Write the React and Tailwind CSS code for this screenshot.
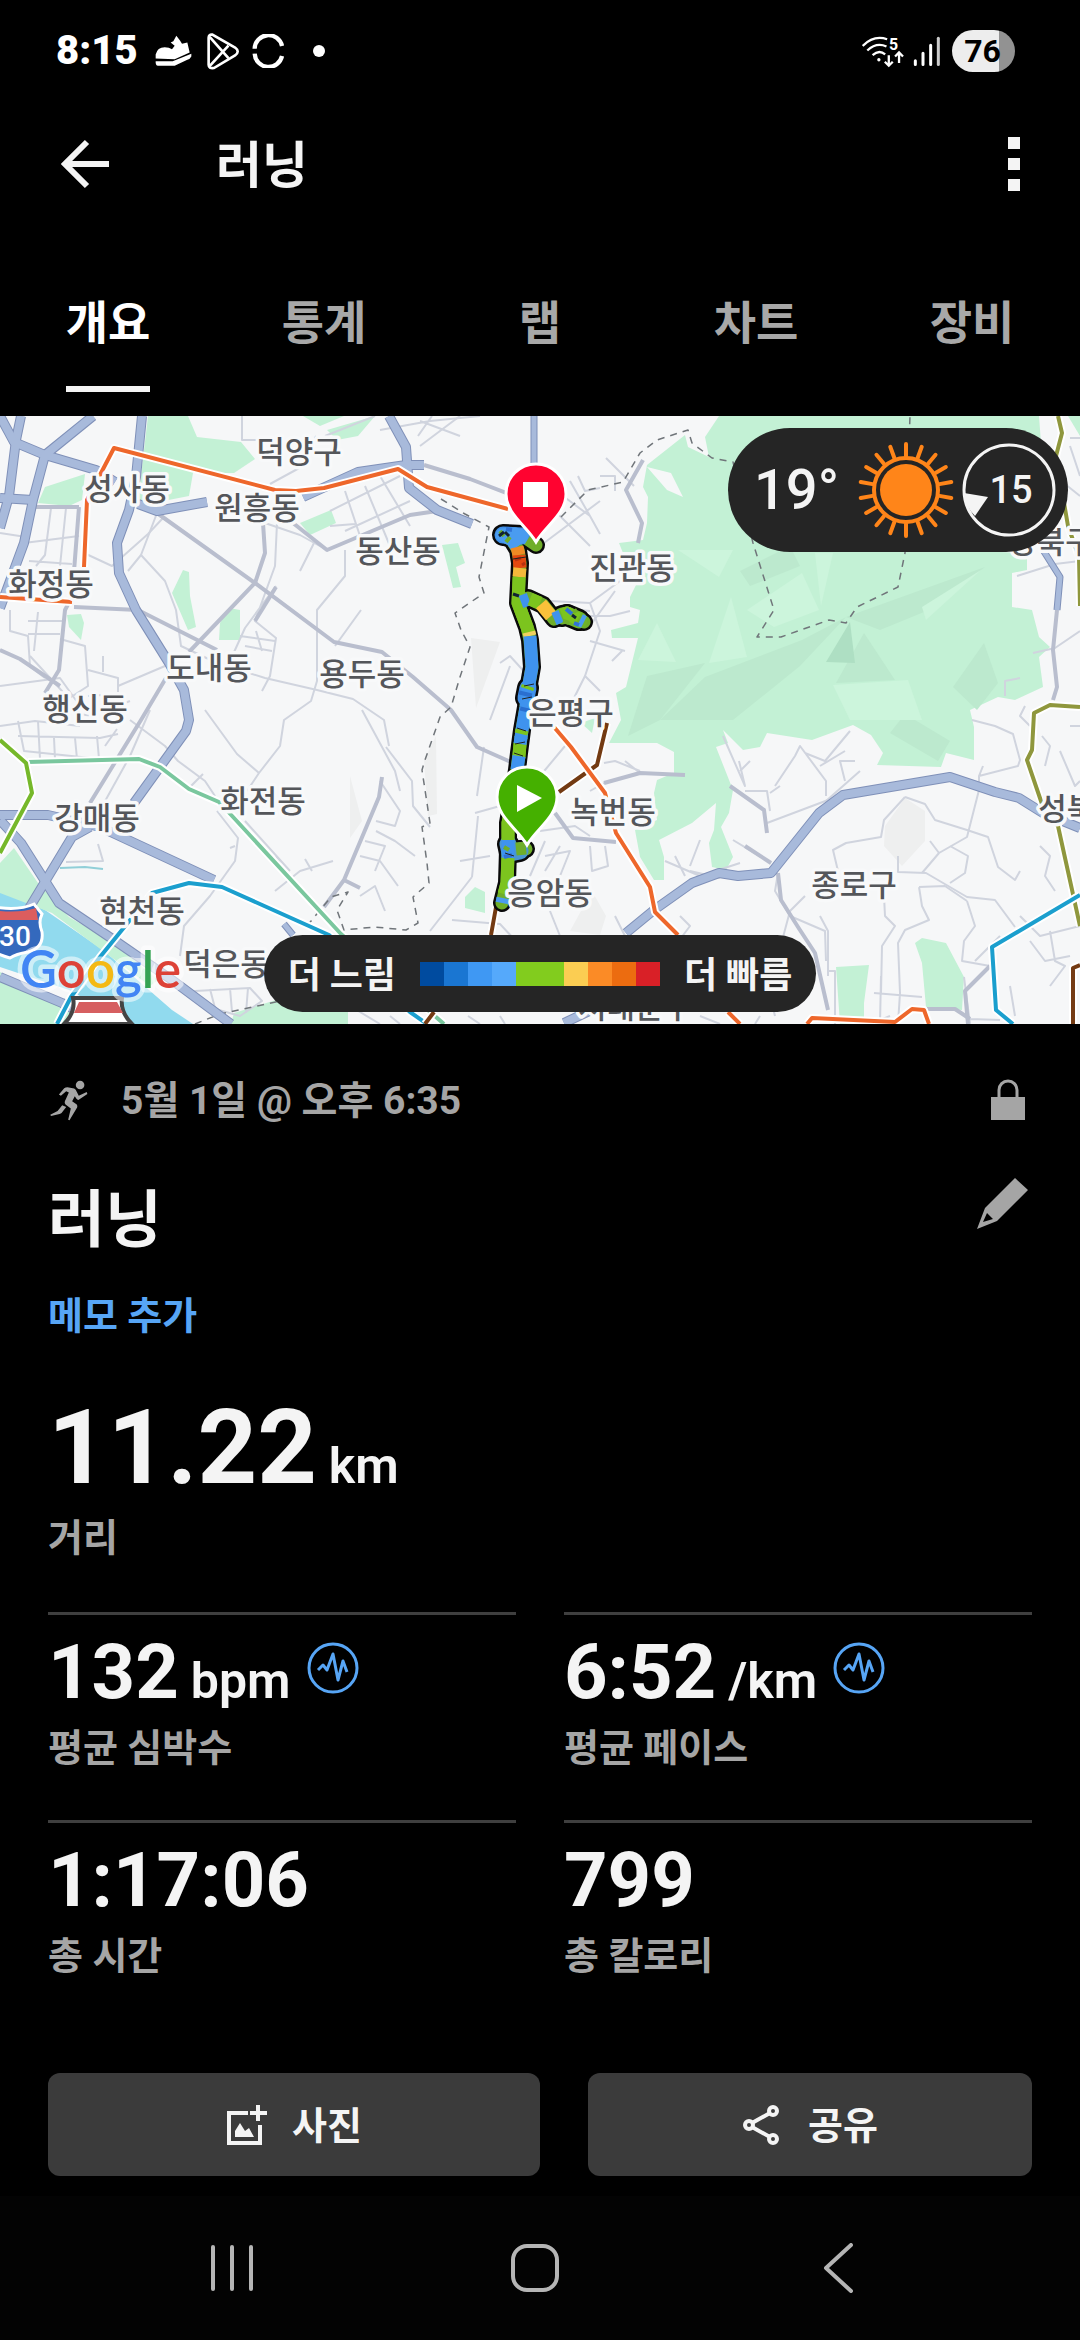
import { useState } from "react";

const tabs = ["개요", "통계", "랩", "차트", "장비"];

const paceColors = [
    "bg-[#004b9f]", "bg-[#1a76d2]", "bg-[#3f98f3]", "bg-[#55a9fb]", "bg-[#82cc1e]",
    "bg-[#82cc1e]", "bg-[#fbcd52]", "bg-[#fb8b26]", "bg-[#ec6c10]", "bg-[#d92027]",
];

const stats = [
    { value: "132", unit: "bpm", label: "평균 심박수", graph: true },
    { value: "6:52", unit: "/km", label: "평균 페이스", graph: true },
    { value: "1:17:06", label: "총 시간" },
    { value: "799", label: "총 칼로리" },
];

const places = [
    ["덕양구", 299, 33], ["성사동", 127, 70], ["원흥동", 257, 89], ["동산동", 398, 132],
    ["화정동", 51, 165], ["도내동", 209, 249], ["용두동", 362, 255], ["행신동", 85, 290],
    ["진관동", 632, 149], ["은평구", 571, 294], ["강매동", 97, 399], ["화전동", 263, 382],
    ["현천동", 142, 492], ["덕은동", 226, 545], ["녹번동", 613, 393], ["응암동", 550, 474],
    ["종로구", 854, 466], ["성북동", 1081, 390], ["강북구", 1051, 123], ["서대문구", 635, 588],
];

const parks = [
    "148,0 188,0 197,21 241,26 255,43 234,57 193,57 189,80 148,88 138,85",
    "38,87 45,71 85,58 82,84 69,90",
    "300,107 331,94 336,107 310,119",
    "327,14 375,0 358,20 337,24",
    "303,0 344,0 320,10",
    "442,129 458,127 465,147 456,151 461,171 453,172",
    "172,177 183,154 189,156 190,180 196,211 188,214",
    "219,224 220,207 229,192 240,194 240,224",
    "67,199 81,198 84,207 81,224 69,211",
    "0,447 14,432 38,467 69,501 114,527 158,564 150,570 52,497 0,477",
    "0,556 62,590 90,608 0,608",
    "234,597 286,581 348,590 348,608 231,608",
    "465,481 475,471 485,476 485,497 465,492",
    "915,527 922,522 946,527 964,561 962,594 926,591 922,547",
    "836,551 869,549 864,587 864,608 840,608",
    "581,307 595,302 592,317",
    "1068,0 1080,0 1080,20",
    "719,0 705,21 709,41 688,31 685,19 647,49 643,71 648,81 647,107 643,124 619,127 623,137 643,141 640,161 630,181 630,191 640,194 638,207 611,214 612,222 638,222 626,271 616,277 621,304 609,327 657,327 674,336 674,357 657,364 654,377 657,404 635,414 640,441 654,464 664,464 664,441 659,424 692,407 716,387 714,414 709,427 712,451 726,454 733,441 721,411 729,397 733,374 716,331 728,327 723,314 743,334 760,331 767,317 812,324 853,309 871,319 883,337 877,349 941,351 946,337 974,344 974,311 970,294 998,281 1015,284 1043,271 1039,241 1050,231 1039,221 1032,194 1012,191 1012,157 1027,154 1027,137 1001,136 1046,94 1039,0",
];

const darkFacets = [
    "705,261 802,224 846,201 800,250 733,304 660,304",
    "864,217 895,264 836,267",
    "953,271 984,227 998,267 977,294",
    "846,201 985,151 929,194 880,214",
    "647,260 705,247 660,304 628,320",
    "890,317 905,298 950,325 938,345",
    "740,155 790,130 800,150 750,170",
];

const lightFacets = [
    "709,247 731,181 747,241",
    "747,194 802,157 819,194 774,211",
    "678,134 733,134 719,161",
    "833,269 908,264 922,304 850,304",
    "638,244 657,207 676,246",
    "922,191 981,154 926,204",
    "815,137 833,137 821,190",
];

const minorRoads = [
    "M242 0V24L265 24M325 20L375 0M316 20L303 50L270 68M418 20L432 0M420 5L460 20M380 14L430 5L480 0",
    "M0 117L26 121M24 127L79 120M29 145L72 148M20 165L75 170M51 92L45 139L36 150M66 92L60 150M84 137L112 150L148 118L163 102",
    "M157 97L141 139L165 165L176 194L181 230L217 247L265 262L317 274L353 283L384 304L389 330M141 139L128 155",
    "M277 107L275 150L255 205L276 222L270 260L262 275M230 245L245 212L276 170M240 220L275 225M245 230L272 235M256 215L262 235",
    "M265 107L300 119L327 134M345 134L345 160L317 194L317 265L311 285L284 304L280 330L259 357L247 375",
    "M361 194L335 230M300 155L315 125M330 95L400 60M345 115L410 85M365 70L390 130M380 60L410 110M345 75L360 120M330 110L355 108",
    "M10 194L10 215L28 220L30 250M28 205L62 205M28 218L60 218M38 196L34 235M60 223L85 230L88 270L65 285M88 254L118 262L118 278L88 280M103 240L103 256",
    "M118 270L165 250M30 240L62 275L68 290M0 234L20 243L45 262M48 290L90 300L130 285M0 270L60 262L80 290",
    "M0 310L35 305L80 310M18 320L100 322L118 318M18 305L24 335L100 343M54 322L55 343M75 322L77 343M97 320L99 343M38 305L40 343M117 313L105 330",
    "M66 446L103 445L98 428M150 294L130 340L104 387M130 304L165 330L178 345L205 365L215 380M191 370L203 358",
    "M205 294L237 338L259 357M217 395L238 422L235 445L210 480L184 510L180 540M235 430L230 432",
    "M275 475L300 455L333 445M312 455L305 443M276 440L285 458M245 405L290 455",
    "M362 294L395 355L400 375M386 331L412 365L413 390L430 411M380 365L400 395L395 410L376 405M376 415L395 425L415 440M365 425L385 430L375 455M360 440L380 445L398 470M360 480L375 470L385 495",
    "M460 0L420 30M477 380L484 331M475 397L500 390M472 461L478 400M472 461L430 515M452 504L500 508L530 540M490 440L460 445",
    "M500 247L510 240L530 262M490 304L510 250M550 90L570 110L590 130M563 80L590 100L600 118M570 65L590 100M540 130L600 85",
    "M600 60L615 60L615 75M578 60L585 75L600 72M606 42L634 70M550 185L590 187L620 165M560 200L610 200L630 195M590 187L600 215L585 260L600 275M585 260L570 290",
    "M615 175L590 210M590 225L625 235M612 245L622 235M540 190L590 195M540 360L565 330M540 415L575 410L590 420M590 430L592 455L608 450L605 430",
    "M545 440L570 435L560 460M545 455L560 430M604 367L590 375M625 345L640 357M604 347L615 345L640 355M545 425L530 460M550 495L560 520M615 500L625 520M680 500L690 510L675 530",
    "M665 445L700 460M675 440L685 460M700 424L690 450M690 455L720 462M739 345L745 370L723 320M740 355L750 345M770 395L767 375L745 375",
    "M775 370L795 340L800 330L826 365L826 380M805 337L825 345L850 315M820 350L845 335M845 365L840 345L855 345M860 355L826 385M770 377L780 370",
    "M733 424L771 447M767 407L836 381M700 460L740 447M540 540L560 545M778 457L775 475L790 500L825 515L826 545M805 480L790 495L782 525",
    "M905 381L884 404L881 421L846 427L833 434L838 455M905 381L925 388L935 404L967 414L988 421L998 451L1015 464L1020 455",
    "M979 374L967 421L939 437L922 457M939 437L930 425M950 430L968 440L965 457L950 467M898 440L898 456L926 457L967 481L995 484L1015 511",
    "M919 471L922 490L929 504L905 514L898 527L900 577L898 608M919 471L945 470L967 485M874 577L922 581M881 560L880 608M890 600L870 608",
    "M884 480L885 500L895 510L882 530L881 577M827 555L835 555L835 608M820 500L828 515L828 560M967 485L975 510L964 525L962 545L990 550",
    "M972 304L995 310L1013 318L1020 344L1018 350L979 360L979 374M979 360L983 350M1025 290L1020 300L1030 310M1005 280L1005 265L1020 262",
    "M1017 160L1055 148L1080 145M1033 237L1055 232L1080 215M1055 60L1080 80M1070 22L1080 22M1070 30L1080 60M1070 310L1080 310M1042 320L1050 330L1045 350",
    "M1040 430L1050 440L1045 460L1055 475M1060 335L1075 370L1080 365M1020 500L1040 520L1080 510M1050 515L1055 545L1065 550L1050 570M1030 525L1045 545L1070 540",
    "M926 593L955 593L970 603L1000 604M964 561L970 608M1000 520L975 545M1010 570L1015 600M195 575L250 572L262 585L240 600L205 590ZM210 573L215 592M230 572L232 596M248 572L246 597",
    "M350 590L380 608M390 600L400 608M468 600L480 608M500 600L505 608M700 600L720 608M760 600L755 608M775 600L770 580L800 560",
];

const roads = [
    "M157 97L255 167L334 226L382 236L413 261L451 294L477 331L513 347",
    "M263 107L265 137L255 167L189 236M166 262L141 304L90 387",
    "M74 191L138 194L217 234",
    "M293 107L327 134L410 99L444 94",
    "M424 49L470 63L517 81",
    "M79 91L72 181L65 194L59 254L45 277",
    "M33 91L79 91",
    "M382 361L379 381L344 464L324 491M344 464L360 472",
    "M643 44L626 74L642 107L638 127",
    "M1057 194L1053 234L1057 271L1053 284",
    "M604 367L640 357L685 359M730 370L764 394L767 417",
    "M555 397L573 422L616 426",
    "M745 430L771 447",
    "M778 457L781 484L798 511L815 537L828 594",
    "M926 593L955 593L970 603",
    "M276 171L255 205",
    "M0 234L20 243L60 270",
    "M990 550L965 575L968 608",
];

const highways = [
    "M21 0L16 24L9 80L0 112",
    "M0 0L14 26L45 39L96 54L115 66",
    "M93 0L45 39L33 84L24 127L0 192",
    "M0 82L33 84",
    "M142 0L136 61L129 94L117 127L119 157L136 194L169 247L184 274L189 304L186 315L165 344L134 387",
    "M90 411L72 421L28 494",
    "M0 399L48 399L100 411L214 464",
    "M0 404L21 427L59 487L114 524L172 564L231 608",
    "M0 561L62 587L103 608",
    "M138 88L157 95L207 86M303 81L358 56L406 49L424 49",
    "M389 0L406 31L409 72L437 94L472 108",
    "M564 607L600 590M626 517L654 494L692 467L719 457L738 460L771 457L819 397L843 379L950 361L995 376L1019 382L1043 397L1080 412",
];

const rails = [
    { color: "#7ac79e", d: "M28 346L139 343L160 351L189 373L219 386L234 402L341 518L444 608" },
    { color: "#76b82a", d: "M0 324L26 347L32 377L0 437" },
    { color: "#1b9fce", d: "M57 608L71 581L100 541L152 477L189 467L222 471L329 519L410 596L427 608" },
    { color: "#8f973d", d: "M1058 0L1062 17L1056 40L1068 110L1079 141L1080 190M1080 291L1050 289L1034 297L1032 334L1027 344L1042 388L1058 410L1080 510" },
    { color: "#1b9fce", d: "M1080 479L992 531L996 594L1013 608" },
    { color: "#733a12", d: "M607 307L597 349L559 376M498 480L491 519M434 596L425 608M1080 549L1073 552L1073 608" },
    { color: "#ee672b", d: "M84 151L87 84L114 32L275 74L296 75L324 72L398 53L427 71L508 93M0 181L72 186" },
    { color: "#ee672b", d: "M554 311L571 331L605 377L616 417L650 471L655 496L678 519M728 596L740 608M807 608L812 602L895 606L912 593L924 594L929 608" },
];

const borders = [
    "M441 83L465 98L489 111L479 161L484 177L455 197L461 214L470 231L460 261L451 291L440 301L425 344L422 354L430 407L422 411L427 447L429 467L413 481L418 507L406 514L375 511L344 514L337 494L348 476L331 481L306 511",
    "M561 101L588 74L623 66L640 37L657 24L688 14L692 27L712 42L733 46L753 127L774 194L757 221L781 221L829 204L846 207L857 191L898 171L905 137L910 0",
    "M195 608L220 598L280 585",
];

// the whole run, used for the black outline under the pace colours
const track = "M536 129L526 122L515 118L502 119L512 124L518 134L520 147L519 167L518 187L527 211L530 224L532 251L528 274L526 291L522 314L519 337L517 354L508 407L508 434L507 467L502 487M518 187L528 182L543 189L554 203L567 197L584 206M508 434L526 433";

// places where the runner went back and forth, so the line gets wider
const loops = [
    { d: "M503 119L522 120", color: "#3f8fe6" },
    { d: "M562 200L567 199L579 204", color: "#6fb52a" },
    { d: "M508 428L510 437L520 435", color: "#4b96cf" },
    { d: "M528 272L526 282", color: "#3f8fe6" },
];

const paceSegments = [
    { color: "#4a9cf0", d: "M528 122L515 118L502 119L512 124L517 131" },
    { color: "#6fae2a", d: "M536 128L528 123" },
    { color: "#f08a24", d: "M517 131L519 139" },
    { color: "#e4480f", d: "M519 139L520 152" },
    { color: "#f5b93a", d: "M520 152L519 161" },
    { color: "#7cc41e", d: "M519 161L518 187L527 211L529 217" },
    { color: "#f0d060", d: "M529 216L530 220" },
    { color: "#3f93ee", d: "M530 220L532 251L528 274L526 291L522 314L521 322" },
    { color: "#2a6fd0", d: "M526 276L525 280M527 292L526 296" },
    { color: "#7cc41e", d: "M528 270L527 273M522 314L521 318" },
    { color: "#7cc41e", d: "M520 327L519 342" },
    { color: "#3f93ee", d: "M521 321L520 328M519 340L517 354" },
    { color: "#7cc41e", d: "M512 390L508 407L508 424" },
    { color: "#3f93ee", d: "M508 424L508 442" },
    { color: "#6fae2a", d: "M516 433L526 432" },
    { color: "#7cc41e", d: "M508 442L507 467L504 478" },
    { color: "#4a9cf0", d: "M503 482L502 487" },
    { color: "#3f93ee", d: "M521 186L529 183" },
    { color: "#7cc41e", d: "M530 183L540 187" },
    { color: "#fbc13a", d: "M541 188L551 200" },
    { color: "#3f93ee", d: "M554 203L561 200" },
    { color: "#7cc41e", d: "M562 199L567 197L578 203" },
    { color: "#4a9cf0", d: "M580 204L584 206" },
];

const Pin = ({ x, y, color, children }) => (
    <g transform={`translate(${x} ${y})`}>
        <path d="M0 0C-9 -16 -30 -28 -30 -48A30 30 0 1 1 30 -48C30 -28 9 -16 0 0Z" fill={color} stroke="#fff" strokeWidth="3" />
        {children}
    </g>
);

const RouteMap = () => (
    <svg viewBox="0 0 1080 608" preserveAspectRatio="xMidYMid slice" className="block w-full h-full" role="img" aria-label="러닝 경로 지도">
        <rect width="1080" height="608" fill="#f6f7f8" />
        <g fill="#eeefef">
            <path d="M471 222L500 226L476 292ZM350 360L362 405L350 422ZM424 344L436 320L437 398L428 400ZM885 410L905 382L925 395L925 425L902 450L884 430ZM570 515L592 475L606 500L600 519Z" />
        </g>
        <polygon points="0,474 45,494 103,534 172,594 193,608 131,608 69,574 0,551" fill="#91daee" />
        <path d="M60 452L85 451L103 453" stroke="#91cfd8" strokeWidth="2" fill="none" />
        {parks.map((p) => <polygon key={p} points={p} fill="#c3f1d5" />)}
        {darkFacets.map((p) => <polygon key={p} points={p} fill="#bce9ce" />)}
        {lightFacets.map((p) => <polygon key={p} points={p} fill="#ccf5dc" />)}
        <polygon points="826,246 850,206 855,247" fill="#aedfc3" />
        <polygon points="647,51 671,57 683,81 667,74" fill="#f6f7f8" />

        <g fill="none" strokeLinejoin="round">
            {minorRoads.map((d) => <path key={d} d={d} stroke="#d0d4de" strokeWidth="2" />)}
            {roads.map((d) => <path key={d} d={d} stroke="#b9bece" strokeWidth="4" />)}
            {borders.map((d) => <path key={d} d={d} stroke="#70757a" strokeWidth="1.5" strokeDasharray="7 6" />)}
            {highways.map((d) => <path key={d} d={d} stroke="#7f90b8" strokeWidth="10" />)}
            {highways.map((d) => <path key={d} d={d} stroke="#a8badb" strokeWidth="8" />)}
            <path d="M534 0V48M1043 134L1060 161L1057 194M284 508L293 519" stroke="#7f90b8" strokeWidth="7" />
            <path d="M534 0V48M1043 134L1060 161L1057 194M284 508L293 519" stroke="#a8badb" strokeWidth="5" />
            {rails.map(({ d, color }) => (
                <g key={d}>
                    <path d={d} stroke="#fff" strokeWidth="8" />
                    <path d={d} stroke={color} strokeWidth="4" />
                </g>
            ))}
        </g>

        <g fill="none" strokeLinejoin="round">
            <path d={track} stroke="#0a0a0a" strokeWidth="18" strokeLinecap="round" />
            {loops.map(({ d }) => <path key={d} d={d} stroke="#0a0a0a" strokeWidth="22" strokeLinecap="round" />)}
            <path d={track} stroke="#6fae2a" strokeWidth="13" strokeLinecap="round" />
            {loops.map(({ d, color }) => <path key={d} d={d} stroke={color} strokeWidth="17" strokeLinecap="round" />)}
            {paceSegments.map(({ d, color }) => <path key={d} d={d} stroke={color} strokeWidth="13" />)}
            <path d="M500 115L504 120M506 126L510 121M563 205L569 207M573 196L577 194M504 431L509 434" stroke="#6fae2a" strokeWidth="4" />
            <path d="M566 193L572 198M574 207L579 209M504 441L512 439M506 113L512 114" stroke="#2f72d6" strokeWidth="4" />
            <path d="M515 144L521 142M522 149L525 147" stroke="#b83210" strokeWidth="3" />
            <path d="M513 143L526 141M524 270L534 268M522 283L532 281M517 312L526 315M515 328L525 326M514 337L523 340M505 437L514 440" stroke="#222" strokeWidth="1" />
            <path d="M505 116L509 120M499 120L504 116M572 199L576 202M513 178L519 180" stroke="#123" strokeWidth="3" />
        </g>

        {/* interstate shield */}
        <path d="M-18 488Q14 497 34 488L42 498Q38 506 42 516Q44 532 28 536Q16 538 10 542Q-20 534 -20 516Z" fill="#3469bd" stroke="#fff" strokeWidth="3" />
        <path d="M-18 492Q14 499 36 492L38 504L-18 504Z" fill="#dc5d5e" />
        <text x="15" y="520" fontSize="28" fontWeight="500" fill="#fff" textAnchor="middle" dominantBaseline="central" fontFamily="Roboto, sans-serif">30</text>
        {/* national road shield */}
        <path d="M73 582H122Q120 596 132 608H64Q76 596 73 582Z" fill="#fff" stroke="#444" strokeWidth="4" />
        <path d="M79 586H117L123 597H74Z" fill="#d65f60" />
        <text x="98" y="627" fontSize="30" fontWeight="700" fill="#444" textAnchor="middle" fontFamily="Roboto, sans-serif">23</text>

        <g fontSize="31" fontWeight="500" fill="#54565a" stroke="#f8f9fa" strokeWidth="7" strokeLinejoin="round" paintOrder="stroke" textAnchor="middle" fontFamily='"Noto Sans CJK KR", sans-serif'>
            {places.map(([name, x, y]) => <text key={name} x={x} y={y} dominantBaseline="central">{name}</text>)}
        </g>

        <Pin x={527} y={429} color="#45b000">
            <path d="M-10 -60L15 -47L-10 -33Z" fill="#fff" />
        </Pin>
        <Pin x={536} y={126} color="#ff0330">
            <rect x="-13" y="-60" width="25" height="25" fill="#fff" />
        </Pin>

        <text x="20" y="572" fontSize="51" fontWeight="600" fontFamily="Lato, sans-serif" stroke="#fff" strokeOpacity="0.55" strokeWidth="9" strokeLinejoin="round" paintOrder="stroke">
            <tspan fill="#4285f4">G</tspan><tspan fill="#dd4237">o</tspan><tspan fill="#f4b914">o</tspan><tspan fill="#4285f4">g</tspan><tspan fill="#34a353">l</tspan><tspan fill="#dd4237">e</tspan>
        </text>
    </svg>
);

const Weather = () => (
    <div className="absolute top-3 right-3 flex items-center h-[124px] pl-[26px] pr-3 rounded-full bg-[#252525] text-[#f4f4f4]">
        <span className="w-[96px] text-[56px] leading-[64px] font-medium">19°</span>
        <svg viewBox="-50 -50 100 100" className="w-[100px] h-[100px] mx-[6px]" aria-label="맑음">
            <circle r="32" fill="none" stroke="#ff8519" strokeWidth="4" />
            <circle r="26" fill="#ff8519" />
            {Array.from({ length: 18 }, (_, i) => (
                <path key={i} d="M0 -34V-46" transform={`rotate(${i * 20})`} stroke="#ff8519" strokeWidth="4" strokeLinecap="round" />
            ))}
        </svg>
        <div className="relative flex items-center justify-center w-[94px] h-[94px]">
            <svg viewBox="0 0 94 94" className="absolute inset-0 w-full h-full" aria-hidden="true">
                <circle cx="47" cy="47" r="45" fill="none" stroke="#f4f4f4" strokeWidth="3" />
                <path d="M2 50L26 54L13 73Q3 63 2 50Z" fill="#f4f4f4" />
            </svg>
            <span className="relative pl-1 text-[38px] leading-[44px] font-medium">15</span>
        </div>
    </div>
);

const PaceLegend = () => (
    <div className="absolute bottom-3 inset-x-0 flex justify-center">
        <div className="flex items-center h-[77px] px-6 gap-6 rounded-full bg-[#252525] text-[#f4f4f4] text-[36px] leading-[48px] font-bold">
            <span className="pt-1">더 느림</span>
            <div className="flex h-6">
                {paceColors.map((color, i) => <span key={i} className={`w-6 h-6 ${color}`}></span>)}
            </div>
            <span className="pt-1">더 빠름</span>
        </div>
    </div>
);

const StatusBar = () => (
    <div className="flex items-center justify-between h-[102px] pl-14 pr-[65px] text-white">
        <div className="flex items-center">
            <span className="w-[98px] text-[40px] leading-[48px] font-black">8:15</span>
            <svg viewBox="340 40 120 110" className="w-[40px] h-[37px]" fill="#fff" aria-hidden="true">
                <path d="M345 116V104Q350 82 372 82Q386 82 394 88L402 78L390 68L398 64L407 48L418 62L424 72L440 68L447 98L402 118Z" />
                <path d="M345 124H396L452 102V110Q448 118 440 120L402 138H352Q344 136 345 124Z" />
            </svg>
            <svg viewBox="495 38 104 112" className="w-[35px] h-[37px] ml-[12px]" fill="none" stroke="#fff" strokeWidth="8" aria-hidden="true">
                <path d="M502 52Q502 42 513 43L582 82Q598 94 582 106L518 144Q502 146 502 134Z" />
                <path d="M505 50L562 114M505 138L562 76" />
            </svg>
            <svg viewBox="630 42 100 102" className="w-[33px] h-[34px] ml-[11px]" fill="none" stroke="#fff" strokeWidth="13" aria-hidden="true">
                <path d="M638 86A42 42 0 0 1 721 78M638 101A42 42 0 0 0 721 108" />
            </svg>
            <span className="w-3 h-3 ml-[28px] rounded-full bg-white"></span>
        </div>
        <div className="flex items-center">
            <svg viewBox="34 46 130 98" className="w-[43px] h-[33px]" fill="none" stroke="#fff" strokeWidth="7" aria-hidden="true">
                <path d="M36 78Q70 44 110 58M50 92Q78 66 108 80M66 106Q86 88 104 104" />
                <circle cx="85" cy="120" r="5" fill="#fff" stroke="none" />
                <path d="M115 106V136M103 126L115 138L127 126M146 130V98M134 110L146 98L158 110" />
                <text x="116" y="90" fontSize="48" fontWeight="700" fill="#fff" stroke="none" fontFamily="Roboto, sans-serif">5</text>
            </svg>
            <svg viewBox="188 46 84 92" className="w-[28px] h-[31px] ml-[8px]" stroke="#fff" strokeWidth="9" strokeLinecap="round" aria-hidden="true">
                <path d="M195 120V131M218 97V131M241 73V131" />
                <path d="M264 52V131" stroke="#ccc" />
            </svg>
            <span className="flex items-center justify-center w-[63px] h-[42px] ml-[11px] pr-[2px] rounded-full bg-linear-to-r from-[#ededed] from-75% to-[#929292] to-75% text-black text-[32px] leading-[42px] font-bold">76</span>
        </div>
    </div>
);

const StatGraphIcon = () => (
    <svg viewBox="0 0 52 52" className="w-[52px] h-[52px] mt-3" fill="none" stroke="#57a5f5" strokeWidth="3" aria-hidden="true">
        <circle cx="26" cy="26" r="24" />
        <path d="M11 28L16 23L20 28L26 12L31 38L36 19L40 30" strokeLinejoin="round" />
    </svg>
);

export default function App() {
    const [activeTab, setActiveTab] = useState("개요");

    return (
        <div className='w-full min-h-screen bg-black text-[#f4f4f4] [font-family:Roboto,"Noto_Sans_CJK_KR",sans-serif]'>
            <StatusBar />

            <header className="flex items-center h-[124px] pl-[60px] pr-[60px]">
                <button type="button" aria-label="뒤로">
                    <svg viewBox="0 0 50 50" className="w-[50px] h-[50px]" fill="none" stroke="#f4f4f4" strokeWidth="6" aria-hidden="true">
                        <path d="M27 3L5 25L27 47M5 25H49" />
                    </svg>
                </button>
                <h1 className="flex-1 pl-[106px] pt-1 text-[50px] leading-[70px] font-bold">러닝</h1>
                <button type="button" aria-label="더보기" className="flex flex-col gap-[9px]">
                    <span className="w-3 h-3 bg-[#f4f4f4]"></span>
                    <span className="w-3 h-3 bg-[#f4f4f4]"></span>
                    <span className="w-3 h-3 bg-[#f4f4f4]"></span>
                </button>
            </header>

            <nav className="grid grid-cols-5 h-[190px] pt-[62px]">
                {tabs.map((tab) => (
                    <button
                        key={tab}
                        type="button"
                        onClick={() => setActiveTab(tab)}
                        className={`flex flex-col items-center text-[46px] leading-[70px] font-bold ${tab === activeTab ? "text-white" : "text-[#a8a8a8]"}`}
                    >
                        <span className="flex flex-col gap-[28px]">
                            {tab}
                            {tab === activeTab && <span className="h-[6px] bg-[#f4f4f4]"></span>}
                        </span>
                    </button>
                ))}
            </nav>

            <section className="relative h-[608px] overflow-hidden">
                <RouteMap />
                <Weather />
                <PaceLegend />
            </section>

            <main className="px-12 pt-12">
                <div className="flex items-center h-[56px] pr-[7px] text-[#a5a5a5]">
                    <svg viewBox="65 55 130 130" className="w-[43px] h-[43px]" fill="#a5a5a5" aria-hidden="true">
                        <circle cx="162" cy="73" r="13" />
                        <path d="M98 102L114 83Q118 80 124 80L144 84Q150 87 151 92L158 106L182 94L184 100L158 118Q154 119 151 115L146 107L138 122L152 132Q155 136 153 141L130 180L126 178L134 144L118 132Q114 128 116 122L128 96L120 92L104 106Z" />
                        <path d="M108 134L120 140L106 158Q104 160 100 161L74 167L72 163L94 152Z" />
                    </svg>
                    <span className="flex-1 pl-[30px] pt-[2px] text-[39px] leading-[56px] font-bold">5월 1일 @ 오후 6:35</span>
                    <svg viewBox="0 0 34 42" className="w-[34px] h-[42px]" aria-label="비공개">
                        <rect y="18" width="34" height="23" fill="#a5a5a5" />
                        <path d="M8 20V11A9 9 0 0 1 26 11V20" fill="none" stroke="#a5a5a5" strokeWidth="3" />
                    </svg>
                </div>

                <div className="flex items-start justify-between h-[70px] mt-[58px] pr-[3px]">
                    <h2 className="text-[62px] leading-[70px] font-bold">러닝</h2>
                    <button type="button" aria-label="제목 편집" className="-mt-2">
                        <svg viewBox="0 0 52 52" className="w-[52px] h-[52px]" aria-hidden="true">
                            <path fillRule="evenodd" d="M0 51L8 30L38 0L51 12L20 43ZM6 44L16 41L10 35Z" fill="#a5a5a5" />
                        </svg>
                    </button>
                </div>

                <button type="button" className="block mt-8 text-[38px] leading-[56px] font-bold text-[#57a5f5]">메모 추가</button>

                <div className="flex items-baseline gap-3 mt-12">
                    <span className="text-[104px] leading-[112px] font-bold">11.22</span>
                    <span className="text-[50px] leading-[56px] font-semibold">km</span>
                </div>
                <p className="mt-[6px] text-[38px] leading-[56px] font-bold text-[#a5a5a5]">거리</p>

                <div className="grid grid-cols-2 gap-x-12 gap-y-[44px] mt-[46px]">
                    {stats.map((stat) => (
                        <div key={stat.label} className="pt-[15px] border-t-[3px] border-[#3f3f3f]">
                            <div className="flex items-start gap-4">
                                <span className="flex items-baseline gap-3">
                                    <span className="text-[76px] leading-[84px] font-bold">{stat.value}</span>
                                    {stat.unit && <span className="text-[50px] leading-[56px] font-semibold">{stat.unit}</span>}
                                </span>
                                {stat.graph && <StatGraphIcon />}
                            </div>
                            <p className="mt-[6px] text-[38px] leading-[56px] font-bold text-[#a5a5a5]">{stat.label}</p>
                        </div>
                    ))}
                </div>

                <div className="grid grid-cols-[492fr_444fr] gap-12 mt-[89px] mb-5 text-[38px] leading-[56px] font-bold">
                    <button type="button" className="flex items-center justify-center gap-6 h-[103px] rounded-xl bg-[#3b3b3b]">
                        <svg viewBox="0 0 42 42" className="w-[42px] h-[42px]" fill="none" stroke="#f4f4f4" strokeWidth="4" aria-hidden="true">
                            <path d="M22 9H3V39H34V21M24 9H41M32 1V17" />
                            <path d="M9 33V27L14 19L19 27L23 24L28 33Z" fill="#f4f4f4" stroke="none" />
                        </svg>
                        <span className="pt-[2px]">사진</span>
                    </button>
                    <button type="button" className="flex items-center justify-center gap-[28px] h-[103px] rounded-xl bg-[#3b3b3b]">
                        <svg viewBox="0 0 38 42" className="w-[38px] h-[42px]" fill="none" stroke="#f4f4f4" strokeWidth="4" aria-hidden="true">
                            <circle cx="7" cy="21" r="4" />
                            <circle cx="31" cy="7" r="4" />
                            <circle cx="31" cy="35" r="4" />
                            <path d="M10 19L28 9M10 23L28 33" />
                        </svg>
                        <span className="pt-[2px]">공유</span>
                    </button>
                </div>
            </main>

            <footer className="grid grid-cols-3 items-center justify-items-center h-[144px] pl-[80px] pr-[90px] bg-[#030303]">
                <button type="button" aria-label="최근 앱" className="flex justify-between w-[42px] h-[46px]">
                    <span className="w-1 rounded-full bg-[#b5b5b5]"></span>
                    <span className="w-1 rounded-full bg-[#b5b5b5]"></span>
                    <span className="w-1 rounded-full bg-[#b5b5b5]"></span>
                </button>
                <button type="button" aria-label="홈" className="w-12 h-12 rounded-2xl border-4 border-[#b5b5b5]"></button>
                <button type="button" aria-label="뒤로 가기">
                    <svg viewBox="0 0 30 50" className="w-[30px] h-[50px]" fill="none" stroke="#b5b5b5" strokeWidth="4" strokeLinecap="round" strokeLinejoin="round" aria-hidden="true">
                        <path d="M28 2L3 25L28 48" />
                    </svg>
                </button>
            </footer>
        </div>
    );
}
